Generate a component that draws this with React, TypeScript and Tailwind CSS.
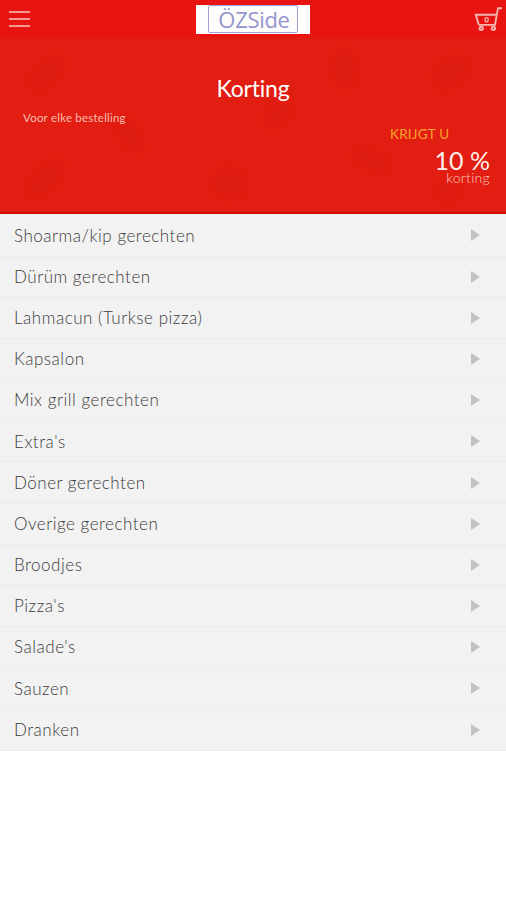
const CATEGORIES = [
  "Shoarma/kip gerechten",
  "Dürüm gerechten",
  "Lahmacun (Turkse pizza)",
  "Kapsalon",
  "Mix grill gerechten",
  "Extra's",
  "Döner gerechten",
  "Overige gerechten",
  "Broodjes",
  "Pizza's",
  "Salade's",
  "Sauzen",
  "Dranken",
];

export default function App() {
  return (
    <div className="min-h-screen bg-white font-['Lato',sans-serif]">
      <Header />
      <DiscountBanner />
      <ul className="bg-[#f2f2f2] pt-[1.4px]">
        {CATEGORIES.map((name) => (
          <CategoryRow key={name} name={name} />
        ))}
      </ul>
    </div>
  );
}

function Header() {
  return (
    <header className="flex h-[38px] items-center justify-between bg-[#e81411] pl-[9px] pr-1 border-b border-[#e2170f]">
      <button aria-label="Menu" className="mt-px flex w-[105px] flex-col gap-[5px]">
        <span className="h-[2px] w-[21px] bg-[#f49a90]" />
        <span className="h-[2px] w-[21px] bg-[#f49a90]" />
        <span className="h-[2px] w-[21px] bg-[#f49a90]" />
      </button>
      <div className="mt-[2px] flex h-[29px] w-[114px] justify-center bg-[#fffdfb]">
        <div className="flex h-[28px] w-[90px] items-center justify-center rounded-[2px] border-[1.5px] border-[#9fa1d6] font-['Open_Sans',sans-serif] text-[22px] font-medium leading-none tracking-[-0.3px] text-[#9295cf]">
          <span className="pl-0.5">ÖZSide</span>
        </div>
      </div>
      <button aria-label="Winkelwagen" className="flex w-[110px] justify-end">
        <Cart />
      </button>
    </header>
  );
}

function Cart() {
  return (
    <svg width="28" height="26" viewBox="0 0 28 26" fill="none" stroke="#f8b5ad" strokeWidth="1.9">
      <path d="M28 2.2H24L21 18.9H5" />
      <path d="M22.6 8.8H1.8L4.8 18.9" />
      <circle cx="7.2" cy="22.3" r="1.7" />
      <circle cx="19.4" cy="22.3" r="1.7" />
      <ellipse cx="12.6" cy="13.7" rx="1.6" ry="2.1" strokeWidth="1.3" />
    </svg>
  );
}

function DiscountBanner() {
  return (
    <section className="relative h-[176px] overflow-hidden border-b-2 border-[#d50f04] bg-[#e21d11] text-white">
      <BannerPattern />
      <div className="relative pt-[36px]">
        <h1 className="text-center text-[23px] leading-7 tracking-[-0.2px]">Korting</h1>
        <p className="mt-2 pl-[23px] text-[11.5px] leading-4 tracking-[0.22px] text-[#f9bdb0]">Voor elke bestelling</p>
        <p className="pl-[390px] text-[13.5px] leading-4 tracking-[0.2px] text-[#f5a52c]">KRIJGT U</p>
        <div className="mt-[7px] flex flex-col items-end pr-4">
          <div className="text-[25px] leading-[22px] text-[#ffeee9]">10 %</div>
          <div className="text-[14px] font-light leading-[13px] tracking-[0.3px] text-[#fbc9be]">korting</div>
        </div>
      </div>
    </section>
  );
}

// Faint food shapes behind the banner text
function BannerPattern() {
  return (
    <svg className="absolute inset-0 blur-[3px]" width="506" height="174" fill="#d91b10" opacity="0.4">
      <ellipse cx="47" cy="35" rx="19" ry="9" transform="rotate(-50 47 35)" />
      <ellipse cx="130" cy="97" rx="8" ry="16" transform="rotate(-30 130 97)" />
      <ellipse cx="46" cy="140" rx="21" ry="9" transform="rotate(-48 46 140)" />
      <circle cx="229" cy="145" r="14" />
      <ellipse cx="278" cy="77" rx="15" ry="8" transform="rotate(-40 278 77)" />
      <ellipse cx="344" cy="31" rx="9" ry="18" />
      <ellipse cx="450" cy="34" rx="18" ry="11" transform="rotate(-40 450 34)" />
      <ellipse cx="371" cy="122" rx="18" ry="7" transform="rotate(20 371 122)" />
      <circle cx="447" cy="153" r="9" />
    </svg>
  );
}

function CategoryRow({ name }: { name: string }) {
  return (
    <li className="flex h-[41.18px] items-center justify-between border-b border-[#ececec] pl-[14px] pr-[26px]">
      <span className="text-[17px] font-light tracking-[0.52px] text-[#3c3c3c]">{name}</span>
      <svg width="9" height="12" viewBox="0 0 9 12" fill="#c2c2c2">
        <path d="M0 0L9 6L0 12Z" />
      </svg>
    </li>
  );
}
